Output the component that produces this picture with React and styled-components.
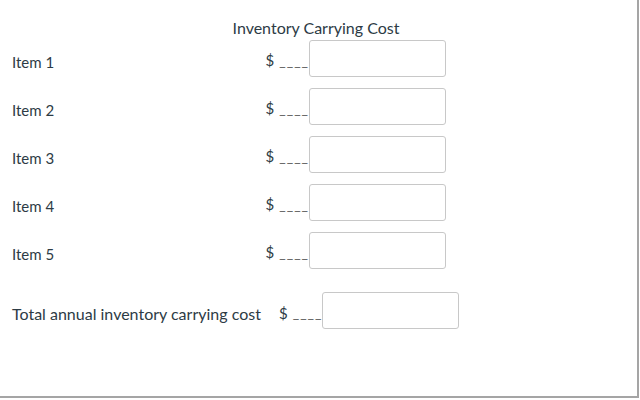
import React from 'react';
import styled, { createGlobalStyle } from 'styled-components';

const GlobalStyle = createGlobalStyle`
    body {
        margin: 0;
        background: #fff;
        font-family: Lato, "Open Sans", sans-serif;
        color: #2d3b45;
    }
`;

const Frame = styled.div`
    box-sizing: border-box;
    width: 639px;
    height: 398px;
    border-right: 2px solid #a5a5a5;
    border-bottom: 2px solid #a5a5a5;
    padding-top: 18px;
`;

const Grid = styled.div`
    display: grid;
    grid-template-columns: 186px 260px;
    grid-auto-rows: 48px;
    grid-template-rows: 16px;
    align-items: center;
`;

const Header = styled.div`
    grid-column: 2;
    text-align: center;
    font-size: 16px;
    line-height: 19px;
    align-self: start;
`;

const Label = styled.div`
    padding-left: 12px;
    padding-top: 7px;
    font-size: 15px;
`;

const Cell = styled.div`
    display: flex;
    justify-content: flex-end;
    align-items: center;
`;

const Dollar = styled.span`
    font-size: 15px;
    margin-right: 5px;
    margin-top: 4px;
`;

const Blank = styled.span`
    font-size: 14px;
    letter-spacing: 1px;
    color: #555;
    margin-top: 4px;
`;

const Box = styled.input`
    box-sizing: border-box;
    width: 137px;
    height: 37px;
    border: 1px solid #c8c8c8;
    border-radius: 3px;
    background: #fff;
    margin: 0;
`;

const TotalRow = styled.div`
    display: flex;
    align-items: center;
    margin-top: 18px;
    padding-left: 12px;
`;

const TotalLabel = styled.span`
    font-size: 16px;
    width: 267px;
    margin-top: 6px;
`;

const items = ['Item 1', 'Item 2', 'Item 3', 'Item 4', 'Item 5'];

export default function App() {
    return (
        <Frame>
            <GlobalStyle />
            <Grid>
                <div />
                <Header>Inventory Carrying Cost</Header>
                {items.map(item => (
                    <React.Fragment key={item}>
                        <Label>{item}</Label>
                        <Cell>
                            <Dollar>$</Dollar>
                            <Blank>____</Blank>
                            <Box type="text" />
                        </Cell>
                    </React.Fragment>
                ))}
            </Grid>
            <TotalRow>
                <TotalLabel>Total annual inventory carrying cost</TotalLabel>
                <Dollar>$</Dollar>
                <Blank>____</Blank>
                <Box type="text" />
            </TotalRow>
        </Frame>
    );
}
